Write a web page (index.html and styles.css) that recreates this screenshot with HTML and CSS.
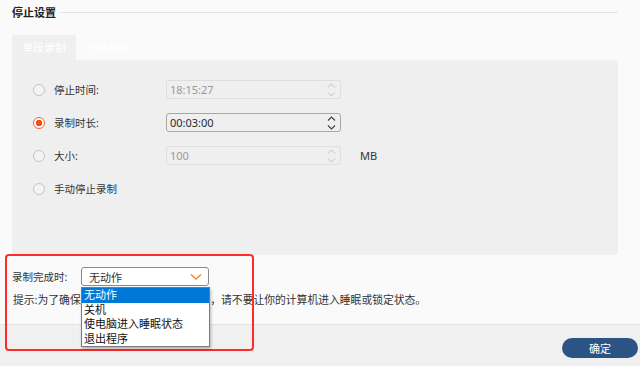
FILE: index.html
```html
<!DOCTYPE html>
<html lang="zh-CN">

<head>
    <meta charset="UTF-8">
    <meta name="viewport" content="width=device-width, initial-scale=1.0">
    <title>停止设置</title>
    <link rel="stylesheet" href="styles.css">
</head>

<body>
    <div class="dialog">
        <div class="content">
            <!-- Section title -->
            <div class="section-title">
                <span>停止设置</span>
                <div class="title-line"></div>
            </div>

            <!-- Tabs -->
            <div class="tabs">
                <div class="tab active">单段录制</div>
                <div class="tab">分段录制</div>
            </div>

            <div class="panel">
                <div class="row">
                    <span class="radio"></span>
                    <span class="label">停止时间:</span>
                    <div class="spin disabled">
                        <span>18:15:27</span>
                        <svg class="arrows" width="9" height="16" viewBox="0 0 9 16"><path d="M1 5.5 L4.5 2 L8 5.5 M1 10.5 L4.5 14 L8 10.5" fill="none" stroke="currentColor" stroke-width="1"/></svg>
                    </div>
                </div>
                <div class="row">
                    <span class="radio checked"></span>
                    <span class="label">录制时长:</span>
                    <div class="spin">
                        <span>00:03:00</span>
                        <svg class="arrows" width="9" height="16" viewBox="0 0 9 16"><path d="M1 5.5 L4.5 2 L8 5.5 M1 10.5 L4.5 14 L8 10.5" fill="none" stroke="currentColor" stroke-width="1.2"/></svg>
                    </div>
                </div>
                <div class="row">
                    <span class="radio"></span>
                    <span class="label">大小:</span>
                    <div class="spin disabled">
                        <span>100</span>
                        <svg class="arrows" width="9" height="16" viewBox="0 0 9 16"><path d="M1 5.5 L4.5 2 L8 5.5 M1 10.5 L4.5 14 L8 10.5" fill="none" stroke="currentColor" stroke-width="1"/></svg>
                    </div>
                    <span class="unit">MB</span>
                </div>
                <div class="row">
                    <span class="radio"></span>
                    <span class="label">手动停止录制</span>
                </div>
            </div>

            <!-- After recording -->
            <div class="finish-row">
                <span class="finish-label">录制完成时:</span>
                <div class="select-wrap">
                    <div class="select">
                        <span>无动作</span>
                        <svg width="12" height="8" viewBox="0 0 12 8"><path d="M1 1.5 L6 6 L11 1.5" fill="none" stroke="#f08c28" stroke-width="1.6"/></svg>
                    </div>
                    <ul class="dropdown">
                        <li class="selected">无动作</li>
                        <li>关机</li>
                        <li>使电脑进入睡眠状态</li>
                        <li>退出程序</li>
                    </ul>
                </div>
            </div>
            <p class="hint">提示:为了确保录制任务能够顺利完成进行，请不要让你的计算机进入睡眠或锁定状态。</p>

            <div class="highlight-box"></div>
        </div>

        <div class="footer">
            <button class="ok-button">确定</button>
        </div>
    </div>
</body>

</html>
```

FILE: styles.css
```css
/* Global Styles */
body {
    margin: 0;
    padding: 0;
    font-family: "Noto Sans", "Noto Sans CJK SC", sans-serif;
    font-size: 10.5px;
    color: #333;
    background-color: #fafafa;
}

.dialog {
    width: 640px;
    height: 366px;
    display: flex;
    flex-direction: column;
    overflow: hidden;
}

.content {
    position: relative;
    flex: 1;
    padding: 0 22px 0 12px;
}

/* Section title */
.section-title {
    display: flex;
    align-items: center;
    height: 24px;
    font-size: 11px;
    font-weight: bold;
    color: #222;
}

.title-line {
    flex: 1;
    height: 1px;
    margin-left: 5px;
    background-color: #e2e2e2;
}

/* Tabs */
.tabs {
    display: flex;
    margin-top: 11px;
    height: 25px;
    font-size: 11px;
}

.tab {
    width: 64px;
    line-height: 25px;
    text-align: center;
    color: #fff;
    border-radius: 3px 3px 0 0;
}

.tab.active {
    background-color: #efefef;
}

/* Panel */
.panel {
    height: 182px;
    padding: 13px 0 0 21px;
    background-color: #efefef;
    border-radius: 0 4px 4px 4px;
}

.row {
    display: flex;
    align-items: center;
    height: 33px;
}

.radio {
    box-sizing: border-box;
    width: 12px;
    height: 12px;
    border: 1px solid #c4c4c4;
    border-radius: 50%;
    background-color: #f4f4f4;
}

.radio.checked {
    border: 1.5px solid #f2652e;
    background: radial-gradient(circle, #fa4f14 0, #fa4f14 3px, #fff 3.4px);
}

.label {
    width: 112px;
    margin-left: 9px;
    color: #333;
}

.spin {
    box-sizing: border-box;
    width: 175px;
    height: 19px;
    display: flex;
    align-items: center;
    justify-content: space-between;
    padding: 0 4px 0 3px;
    border: 1px solid #a8a8a8;
    border-radius: 3px;
    color: #2a2a2a;
    font-size: 11px;
}

.spin .arrows {
    color: #444;
}

.spin.disabled {
    border-color: #dedede;
    color: #999;
}

.spin.disabled .arrows {
    color: #c0c0c0;
}

.unit {
    margin-left: 19px;
    color: #333;
    font-size: 11px;
}

/* Finish action */
.finish-row {
    display: flex;
    align-items: center;
    margin-top: 12px;
    height: 19px;
}

.finish-label {
    width: 69px;
}

.select-wrap {
    position: relative;
}

.select {
    box-sizing: border-box;
    width: 128px;
    height: 19px;
    display: flex;
    align-items: center;
    justify-content: space-between;
    padding: 0 6px 0 7px;
    background-color: #fff;
    border: 1px solid #8a8a8a;
    border-radius: 3px;
    font-size: 11px;
}

.dropdown {
    position: absolute;
    top: 20px;
    left: 0;
    z-index: 2;
    box-sizing: border-box;
    width: 129px;
    margin: 0;
    padding: 0;
    list-style-type: none;
    background-color: #fff;
    border: 1px solid #7a7a7a;
    box-shadow: 1px 2px 3px rgba(0, 0, 0, 0.25);
    font-size: 11px;
}

.dropdown li {
    height: 14.5px;
    line-height: 14.5px;
    padding-left: 2px;
    color: #111;
}

.dropdown li.selected {
    background-color: #0078d7;
    color: #fff;
}

.hint {
    margin: 5px 0 0 1px;
    color: #333;
    font-size: 10.8px;
}

/* Red annotation */
.highlight-box {
    position: absolute;
    left: 5px;
    top: 254px;
    width: 245px;
    height: 93px;
    border: 2px solid #ff2a2a;
    border-radius: 4px;
    pointer-events: none;
}

/* Footer */
.footer {
    height: 41px;
    display: flex;
    align-items: center;
    justify-content: flex-end;
    padding-right: 2px;
    background-color: #f0f0f0;
    border-top: 1px solid #e2e2e2;
}

.ok-button {
    width: 76px;
    height: 20px;
    margin-top: 4px;
    border: none;
    border-radius: 10px;
    background-color: #2b5485;
    color: #fff;
    font-family: "Noto Sans CJK SC", sans-serif;
    font-size: 11px;
    cursor: pointer;
}
```
